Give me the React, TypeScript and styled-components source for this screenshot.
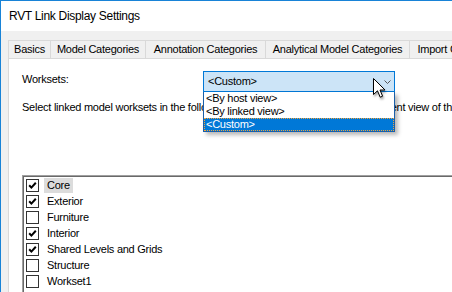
import React from 'react';
import styled, { createGlobalStyle } from 'styled-components';

const Global = createGlobalStyle`
  html, body { margin: 0; padding: 0; background: #fff; overflow: hidden; }
  body { width: 452px; height: 292px; }
  #root { width: 452px; height: 292px; }
`;

const Window = styled.div`
  width: 452px;
  height: 292px;
  box-sizing: border-box;
  border-left: 1px solid #1883d7;
  border-top: 1px solid #1883d7;
  background: #f0f0f0;
  overflow: hidden;
  display: flex;
  flex-direction: column;
  font-family: "Liberation Sans", Arial, sans-serif;
  color: #000;
`;

const TitleBar = styled.div`
  height: 30px;
  flex: none;
  background: #fff;
  padding-left: 8px;
  font-size: 12px;
  line-height: 30px;
  letter-spacing: -0.3px;
  white-space: nowrap;
`;

const Body = styled.div`
  flex: 1;
  min-height: 0;
  padding: 9px 0 0 7px;
  display: flex;
  flex-direction: column;
`;

const TabStrip = styled.div`
  display: flex;
  height: 18px;
  flex: none;
`;

const Tab = styled.div<{ $w: number; $first?: boolean }>`
  width: ${(p) => p.$w}px;
  flex: none;
  box-sizing: border-box;
  height: 18px;
  margin-left: ${(p) => (p.$first ? 0 : -1)}px;
  border: 1px solid #d9d9d9;
  border-bottom: none;
  background: #f0f0f0;
  font-size: 11px;
  line-height: 17px;
  letter-spacing: -0.25px;
  text-align: center;
  white-space: nowrap;
  overflow: hidden;
`;

const Panel = styled.div`
  flex: 1;
  min-height: 0;
  background: #fff;
  border-top: 1px solid #d9d9d9;
  border-left: 1px solid #d9d9d9;
  padding: 12px 0 0 13px;
  display: flex;
  flex-direction: column;
  font-size: 11px;
  letter-spacing: -0.25px;
`;

const FieldRow = styled.div`
  display: flex;
  align-items: flex-start;
  height: 21px;
  flex: none;
  position: relative;
  z-index: 2;
`;

const FieldLabel = styled.div`
  width: 181px;
  flex: none;
  padding-top: 2px;
  line-height: 13px;
`;

const ComboWrap = styled.div`
  position: relative;
  width: 192px;
  flex: none;
`;

const Combo = styled.div`
  box-sizing: border-box;
  height: 21px;
  border: 1px solid #0078d7;
  background: #cce4f7;
  display: flex;
  align-items: center;
  justify-content: space-between;
  padding: 0 3px 0 4px;
  line-height: 19px;
`;

const DropList = styled.div`
  position: absolute;
  top: 21px;
  left: 0;
  width: 192px;
  box-sizing: border-box;
  border: 1px solid #1a5fa8;
  border-top: none;
  background: #fff;
  box-shadow: 3px 3px 4px rgba(0, 0, 0, 0.28);
  z-index: 2;
`;

const DropItem = styled.div<{ $selected?: boolean }>`
  height: 13px;
  line-height: 13px;
  padding-left: 2px;
  white-space: nowrap;
  background: ${(p) => (p.$selected ? '#0078d7' : 'transparent')};
  color: ${(p) => (p.$selected ? '#fff' : '#000')};
  outline: ${(p) => (p.$selected ? '1px dotted #f2a33a' : 'none')};
  outline-offset: -1px;
`;

const Cursor = styled.svg`
  position: absolute;
  left: 170px;
  top: 7px;
  z-index: 3;
  filter: drop-shadow(1px 2px 1px rgba(0, 0, 0, 0.35));
`;

const Description = styled.div`
  margin-top: 9px;
  line-height: 13px;
  white-space: nowrap;
  flex: none;
`;

const CheckList = styled.div`
  margin-top: 61px;
  width: 500px;
  flex: 1;
  box-sizing: border-box;
  border-top: 1px solid #a0a0a0;
  border-left: 1px solid #a0a0a0;
  box-shadow: inset 1px 1px 0 #696969;
  padding: 1px 0 0 3px;
`;

const ListRow = styled.div`
  height: 16px;
  display: flex;
  align-items: center;
`;

const Box = styled.div`
  width: 13px;
  height: 13px;
  box-sizing: border-box;
  border: 1px solid #333;
  background: #fff;
  flex: none;
  display: flex;
  align-items: center;
  justify-content: center;
`;

const ItemText = styled.span<{ $hl?: boolean }>`
  margin-left: 5px;
  padding: 0 3px;
  height: 15px;
  line-height: 15px;
  background: ${(p) => (p.$hl ? '#dcdcdc' : 'transparent')};
  white-space: nowrap;
`;

const tabs = [
  { label: 'Basics', w: 43 },
  { label: 'Model Categories', w: 96 },
  { label: 'Annotation Categories', w: 121 },
  { label: 'Analytical Model Categories', w: 145 },
  { label: 'Import Categories', w: 100 },
];

const worksets = [
  { name: 'Core', checked: true, hl: true },
  { name: 'Exterior', checked: true },
  { name: 'Furniture', checked: false },
  { name: 'Interior', checked: true },
  { name: 'Shared Levels and Grids', checked: true },
  { name: 'Structure', checked: false },
  { name: 'Workset1', checked: false },
];

const Check = () => (
  <svg width="9" height="9" viewBox="0 0 9 9">
    <path d="M1.2 4.2 L3.4 6.6 L7.8 1.8" fill="none" stroke="#000" strokeWidth="2" />
  </svg>
);

export default function App() {
  return (
    <>
      <Global />
      <Window>
        <TitleBar>RVT Link Display Settings</TitleBar>
        <Body>
          <TabStrip>
            {tabs.map((t, i) => (
              <Tab key={t.label} $w={t.w} $first={i === 0}>
                {t.label}
              </Tab>
            ))}
          </TabStrip>
          <Panel>
            <FieldRow>
              <FieldLabel>Worksets:</FieldLabel>
              <ComboWrap>
                <Combo>
                  <span>&lt;Custom&gt;</span>
                  <svg width="7" height="4" viewBox="0 0 7 4">
                    <polyline points="0.5,0.5 3.5,3.5 6.5,0.5" fill="none" stroke="#555" strokeWidth="1" />
                  </svg>
                </Combo>
                <DropList>
                  <DropItem>&lt;By host view&gt;</DropItem>
                  <DropItem>&lt;By linked view&gt;</DropItem>
                  <DropItem $selected>&lt;Custom&gt;</DropItem>
                </DropList>
                <Cursor width="14" height="22" viewBox="0 0 14 22">
                  <path
                    d="M0.5 0.5 L0.5 16.5 L4.5 12.8 L7.2 19.2 L9.6 18.2 L7 12 L12 12 Z"
                    fill="#fff"
                    stroke="#000"
                    strokeWidth="1"
                    strokeLinejoin="miter"
                  />
                </Cursor>
              </ComboWrap>
            </FieldRow>
            <Description>
              Select linked model worksets in the following list to make them visible in the current view of the host model.
            </Description>
            <CheckList>
              {worksets.map((w) => (
                <ListRow key={w.name}>
                  <Box>{w.checked && <Check />}</Box>
                  <ItemText $hl={w.hl}>{w.name}</ItemText>
                </ListRow>
              ))}
            </CheckList>
          </Panel>
        </Body>
      </Window>
    </>
  );
}
